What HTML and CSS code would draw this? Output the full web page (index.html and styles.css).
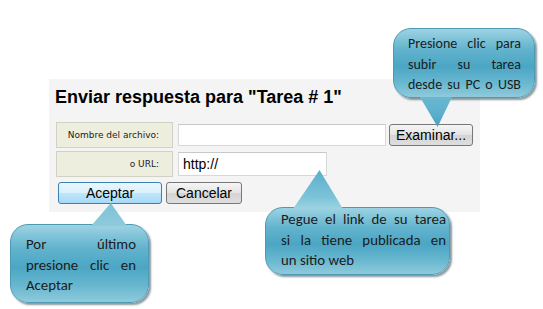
FILE: index.html
```html
<!DOCTYPE html>
<html lang="es">
<head>
<meta charset="UTF-8">
<meta name="viewport" content="width=device-width, initial-scale=1.0">
<title>Enviar respuesta</title>
<link rel="stylesheet" href="styles.css">
</head>
<body>

<div class="panel">
    <h2>Enviar respuesta para "Tarea # 1"</h2>
    <div class="row">
        <div class="label">Nombre del archivo:</div>
        <input type="text" class="field field-file">
        <button class="btn">Examinar...</button>
    </div>
    <div class="row">
        <div class="label">o URL:</div>
        <input type="text" class="field field-url" value="http://">
    </div>
    <div class="actions">
        <button class="btn btn-primary">Aceptar</button>
        <button class="btn btn-cancel">Cancelar</button>
    </div>
</div>

<!-- callouts -->
<div class="bubble bubble-top">
    <span class="line">Presione clic para</span>
    <span class="line">subir su tarea</span>
    <span class="line">desde su PC o USB</span>
</div>
<div class="bubble bubble-left">
    <span class="line">Por último</span>
    <span class="line">presione clic en</span>
    <span class="line last">Aceptar</span>
</div>
<div class="bubble bubble-mid">
    <span class="line">Pegue el link de su tarea</span>
    <span class="line">si la tiene publicada en</span>
    <span class="line last">un sitio web</span>
</div>

</body>
</html>
```

FILE: styles.css
```css
body {
    margin: 0;
    background: #fff;
    font-family: Arial, "Liberation Sans", sans-serif;
    position: relative;
    width: 543px;
    height: 309px;
    overflow: hidden;
}
.panel {
    margin: 79px 0 0 49px;
    width: 431px;
    height: 133px;
    box-sizing: border-box;
    padding: 8px 0 0 6px;
    background: #f4f4f4;
}
h2 {
    margin: 0 0 15px 0;
    font-size: 18px;
    line-height: 20px;
    color: #000;
}
.row {
    display: flex;
    align-items: center;
    margin-bottom: 3px;
    margin-left: 1px;
}
.label {
    width: 117px;
    height: 26px;
    box-sizing: border-box;
    border: 1px solid #d2d2c4;
    background: #eeeedf;
    font-family: Tahoma, "DejaVu Sans", sans-serif;
    font-size: 9px;
    line-height: 24px;
    text-align: right;
    padding-right: 13px;
    color: #222;
}
.field {
    margin-left: 5px;
    height: 22px;
    box-sizing: border-box;
    border: 1px solid #d8d8d8;
    border-top-color: #c8c8c8;
    background: #fff;
    font-family: Arial, "Liberation Sans", sans-serif;
    font-size: 14px;
    padding: 0 4px;
    color: #000;
}
.field-file {
    width: 208px;
}
.field-url {
    width: 149px;
    height: 24px;
}
.btn {
    height: 22px;
    margin-left: 3px;
    padding: 0 6px;
    border: 1px solid #777;
    border-radius: 3px;
    background: linear-gradient(#f6f6f6, #e3e3e3 50%, #d4d4d4 51%, #dedede);
    font-family: Arial, "Liberation Sans", sans-serif;
    font-size: 14px;
    color: #000;
}
.actions {
    display: flex;
    margin: 5px 0 0 3px;
}
.actions .btn {
    margin-left: 0;
    margin-right: 4px;
}
.btn-primary {
    width: 104px;
    border-color: #3c7fb1;
    background: linear-gradient(#eaf6fd, #d9f0fc 50%, #bee6fd 51%, #a7d9f5);
}
.btn-cancel {
    width: 76px;
}
.field-file + .btn {
    width: 84px;
}

/* callout bubbles */
.bubble {
    position: absolute;
    box-sizing: border-box;
    border: 1px solid #4e9ab5;
    border-radius: 18px;
    background: linear-gradient(#9dd3e3, #62b3cd 30%, #4ba6c4 55%, #6ab8d0 80%, #8fcadb);
    box-shadow: 2px 2px 2px rgba(40, 70, 80, 0.55);
    font-family: Carlito, "Open Sans", sans-serif;
    font-size: 14.8px;
    color: #1b1b1b;
}
.line {
    display: block;
    height: 20.5px;
    line-height: 20.5px;
    text-align: justify;
    text-align-last: justify;
    white-space: nowrap;
}
.line.last {
    text-align-last: left;
}
.bubble::before {
    content: "";
    position: absolute;
}
.bubble-top {
    left: 393px;
    top: 28px;
    width: 142px;
    height: 70px;
    padding: 5px 13px 0 14px;
    font-size: 14px;
}
.bubble-top::before {
    left: 26px;
    top: 68px;
    width: 32px;
    height: 30px;
    background: linear-gradient(#6ab8d0, #5aaecb 60%, #4a9fc0);
    clip-path: polygon(0 0, 100% 0, 55% 100%);
}
.bubble-left {
    left: 10px;
    top: 224px;
    width: 139px;
    height: 79px;
    padding: 9px 12px 0 15px;
}
.bubble-left::before {
    left: 80px;
    top: -22px;
    width: 36px;
    height: 23px;
    background: linear-gradient(#7cc3d8, #8fcadb);
    clip-path: polygon(55% 0, 100% 100%, 0 100%);
}
.bubble-mid {
    left: 265px;
    top: 207px;
    width: 185px;
    height: 68px;
    padding: 1px 3px 0 15px;
}
.bubble-mid::before {
    left: 27px;
    top: -38px;
    width: 50px;
    height: 39px;
    background: linear-gradient(#5aaecb, #7cc3d8 70%, #9dd3e3);
    clip-path: polygon(53% 0, 100% 100%, 0 100%);
}
```
